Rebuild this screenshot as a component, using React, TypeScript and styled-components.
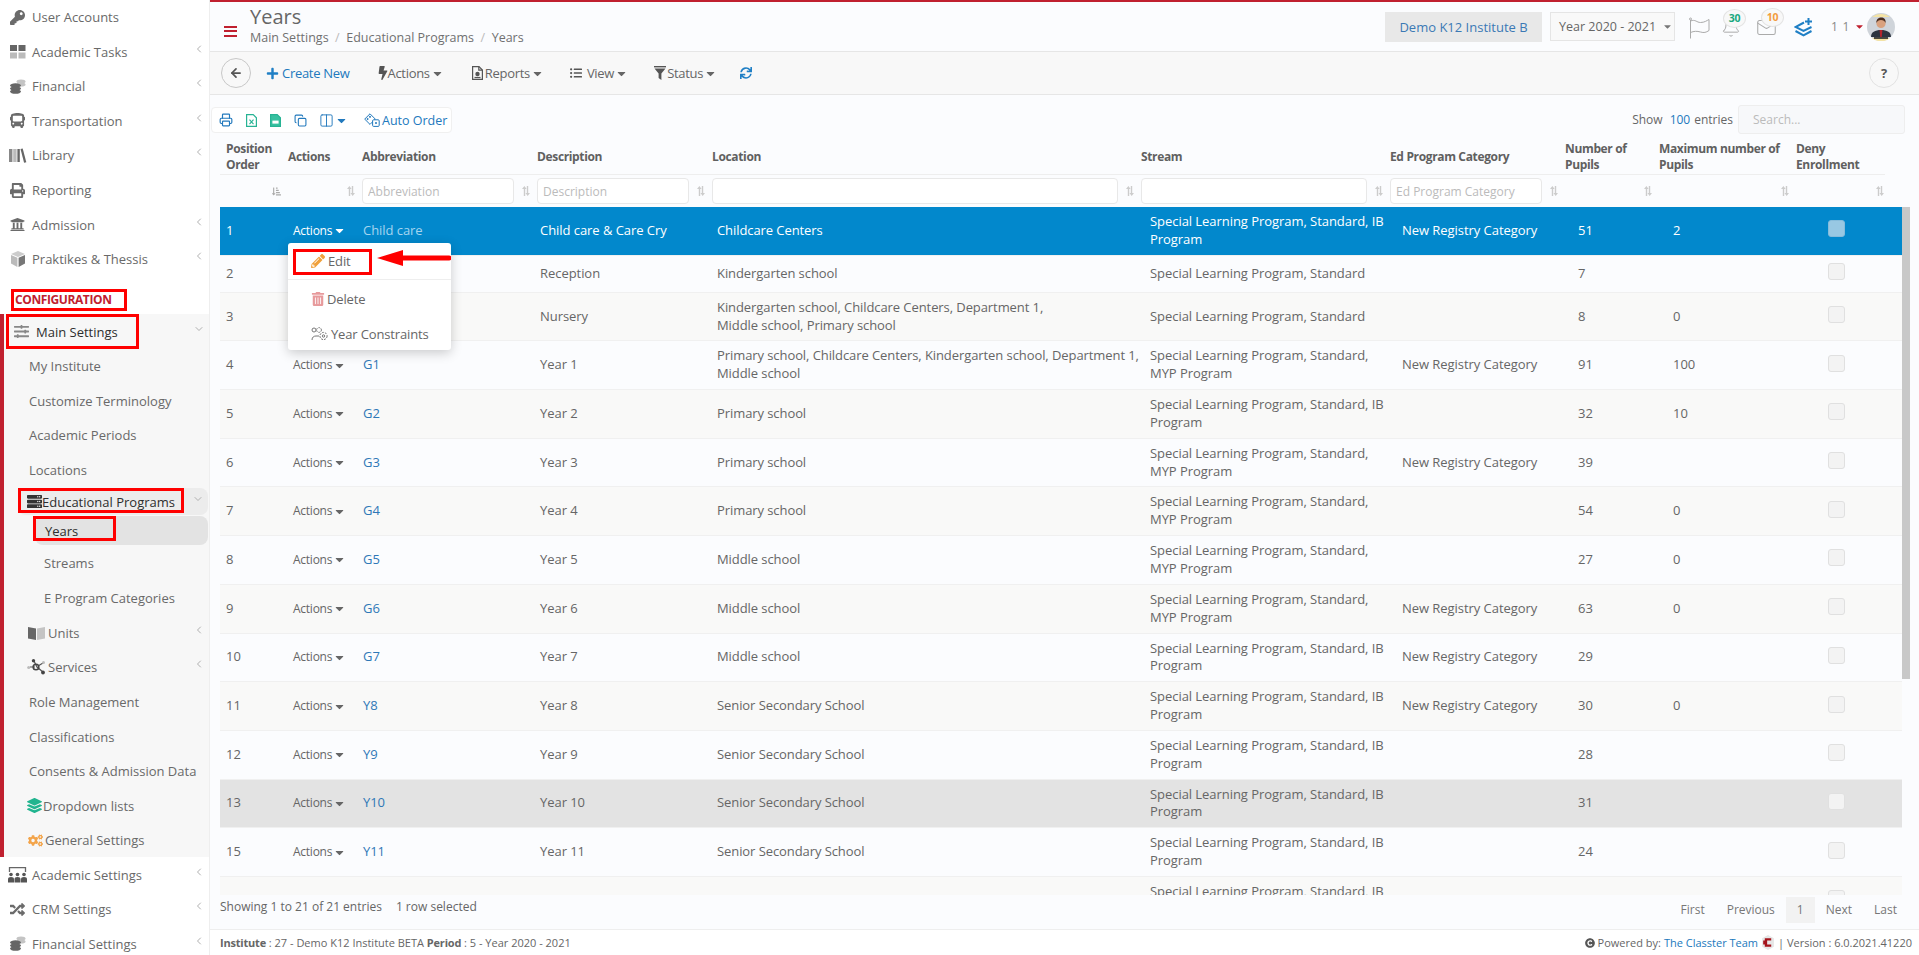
import React from 'react';
import styled, { createGlobalStyle } from 'styled-components';
import { ChevronLeft, ChevronDown, ArrowLeft, Printer, Copy, Columns2, Bell, Mail } from 'lucide-react';
import {
  FaKey, FaBus, FaPrint, FaUniversity, FaSlidersH, FaServer, FaLayerGroup, FaCogs, FaRandom,
  FaPlus, FaBolt, FaListUl, FaSync, FaCaretDown, FaPencilAlt, FaTrashAlt, FaCopyright,
  FaSortAmountDownAlt,
} from 'react-icons/fa';

const GlobalStyle = createGlobalStyle`
  html, body { margin: 0; padding: 0; height: 100%; overflow: hidden; background: #fff; }
  body, input { font-family: "Open Sans", "Liberation Sans", sans-serif; }
  * { box-sizing: border-box; }
`;

const RED = '#c0202f';
const BLUE = '#2279bd';

/* small duotone icons that the packages don't have */
const GridIcon = () => (
  <svg width="16" height="14" viewBox="0 0 16 14">
    <rect x="0" y="0" width="7" height="6" fill="#666" />
    <rect x="8.5" y="0" width="7" height="6" fill="#666" />
    <rect x="0" y="7.5" width="7" height="6" fill="#bbb" />
    <rect x="8.5" y="7.5" width="7" height="6" fill="#bbb" />
  </svg>
);
const CoinsIcon = () => (
  <svg width="16" height="15" viewBox="0 0 16 15">
    <ellipse cx="11" cy="2.5" rx="4.5" ry="2" fill="#c4c4c4" />
    <ellipse cx="11" cy="5.5" rx="4.5" ry="2" fill="#c4c4c4" />
    <ellipse cx="5.5" cy="6.5" rx="5.5" ry="2.2" fill="#666" />
    <ellipse cx="5.5" cy="9.6" rx="5.5" ry="2.2" fill="#666" />
    <ellipse cx="5.5" cy="12.6" rx="5.5" ry="2.2" fill="#666" />
  </svg>
);
const BooksIcon = () => (
  <svg width="18" height="15" viewBox="0 0 18 15">
    <rect x="0" y="1" width="3.4" height="13" fill="#888" />
    <rect x="4.2" y="1" width="3.4" height="13" fill="#bbb" />
    <rect x="8.4" y="1" width="2.4" height="13" fill="#666" />
    <path d="M11.5 1l2.2-.6 3.6 13.8-2.2.6z" fill="#666" />
  </svg>
);
const CubeIcon = () => (
  <svg width="16" height="16" viewBox="0 0 16 16">
    <path d="M8 0l7 3-7 3-7-3z" fill="#ccc" />
    <path d="M1 4l6.4 2.8V16L1 12.6z" fill="#bbb" />
    <path d="M15 4L8.6 6.8V16l6.4-3.4z" fill="#777" />
  </svg>
);
const BookIcon = () => (
  <svg width="17" height="14" viewBox="0 0 17 14">
    <path d="M0 1l8 1.4V14L0 12.4z" fill="#666" />
    <path d="M9 2.4L17 1v11.4L9 14z" fill="#c4c4c4" />
  </svg>
);
const NodesIcon = () => (
  <svg width="19" height="16" viewBox="0 0 19 16">
    <path d="M7 2l3 6 6 5M8 8l-5 0M11 7l5-3" stroke="#555" strokeWidth="1.2" fill="none" />
    <circle cx="6.5" cy="1.8" r="1.7" fill="#444" />
    <circle cx="9" cy="8" r="2.8" fill="none" stroke="#444" strokeWidth="1.6" />
    <circle cx="1.7" cy="8.4" r="1.5" fill="#bbb" />
    <circle cx="16" cy="13.5" r="1.9" fill="#444" />
    <circle cx="16.5" cy="3.5" r="1.5" fill="#bbb" />
  </svg>
);
const ClassroomIcon = () => (
  <svg width="19" height="16" viewBox="0 0 19 16">
    <path d="M1.5 5V.7h16V5" stroke="#666" strokeWidth="1.3" fill="none" />
    {[3, 9.5, 16].map((x) => (
      <g key={x} fill="#555">
        <circle cx={x} cy="7.5" r="1.8" />
        <path d={`M${x - 3} 15.5v-3.2a3 2.2 0 0 1 6 0v3.2z`} />
      </g>
    ))}
  </svg>
);
const SortIcon = () => (
  <svg width="8" height="10" viewBox="0 0 8 10" fill="#cccccc">
    <path d="M1.800 10V3H0l2.400-3 2.200 3H3.200v7zM4.800 0h1.400v7H8l-2.300 3-2.200-3h1.300z" />
  </svg>
);
const XlsIcon = ({ solid }: { solid?: boolean }) => (
  <svg width="11" height="13" viewBox="0 0 11 13">
    <path d="M.6.6h6.6l3.200 3.200v8.600H.6z" fill={solid ? '#38c0a0' : 'none'} stroke="#27b394" strokeWidth="1.2" />
    {solid
      ? <rect x="2.400" y="6.600" width="6.200" height="3" fill="#fff" />
      : <path d="M3.500 5.600l4 4.600m0-4.600l-4 4.600" stroke="#27b394" strokeWidth="1.1" />}
  </svg>
);
const DiceIcon = () => (
  <svg width="16" height="14" viewBox="0 0 16 14" fill="none" stroke={BLUE} strokeWidth="1">
    <path d="M6 .8l5.300 5.300L6 11.400.7 6.100z" />
    <rect x="8.600" y="6.800" width="6.600" height="6.600" rx="1" fill="#fff" />
    <circle cx="6" cy="3.800" r=".6" fill={BLUE} />
    <circle cx="3.600" cy="6" r=".6" fill={BLUE} />
    <circle cx="12" cy="10" r=".6" fill={BLUE} />
  </svg>
);
const LayersPlusIcon = () => (
  <svg width="19" height="19" viewBox="0 0 19 19" fill="none" stroke="#1f7fc5" strokeWidth="2">
    <path d="M10 4.500L1.500 9l8 4 8-4" />
    <path d="M1.500 13l8 4.400 8-4.400" />
    <path d="M14.500 0v7M11 3.500h7" />
  </svg>
);
const FlagIcon = () => (
  <svg width="21" height="22" viewBox="0 0 21 22" fill="none" stroke="#aaa" strokeWidth="1">
    <circle cx="1.500" cy="2" r="1" />
    <path d="M1.500 3v18.500" />
    <path d="M1.500 4c5-2 6 1.500 10 1.500S18 3.500 20 2.500v11c-3 2-5 2.500-8.500 1.500s-6.500-1-10 .5" />
  </svg>
);
const GearsOutline = () => (
  <svg width="17" height="14" viewBox="0 0 17 14" fill="none" stroke="#777" strokeWidth="1">
    <circle cx="3" cy="3" r="2" />
    <circle cx="8" cy="3" r="2.400" strokeDasharray="1.6 .8" />
    <circle cx="12.500" cy="9" r="3.600" strokeDasharray="2 1" />
    <circle cx="12.500" cy="9" r="1.200" />
    <path d="M1 13c0-3 2-4 4-4h3" />
  </svg>
);
const ReportIcon = () => (
  <svg width="11" height="14" viewBox="0 0 11 14" fill="none" stroke="#555" strokeWidth="1.2">
    <path d="M.6.6h6.400l3.400 3.400v9.400H.6z" />
    <path d="M6.800.8v3.400h3.400" />
    <circle cx="5.500" cy="8" r="2.200" fill="#555" stroke="none" />
    <path d="M2.500 11.500h6" />
  </svg>
);
const StatusFilterIcon = () => (
  <svg width="12" height="14" viewBox="0 0 12 14" fill="#555">
    <rect x="0" y="0" width="12" height="1.400" />
    <path d="M.5 2.500h11L7.400 7.500V14L4.600 12V7.500z" />
  </svg>
);
const Avatar = () => (
  <svg width="28" height="28" viewBox="0 0 28 28">
    <circle cx="14" cy="14" r="14" fill="#cfd4da" />
    <path d="M14 1a14 14 0 0 1 9 3H5a14 14 0 0 1 9-3zM5 25h18a14 14 0 0 1-18 0z" fill="#f4e3a4" />
    <path d="M4 24c0-5 4-7 10-7s10 2 10 7z" fill="#2c3440" />
    <path d="M12.600 17h2.800l-.6 7h-1.600z" fill="#b3242c" />
    <circle cx="14" cy="10.500" r="4.600" fill="#d9a17e" />
    <path d="M9.300 10c0-4 2.400-5.500 5-5.500s4.600 1.700 4.400 5.500c-1-2-2.400-3-4.700-3s-3.700 1-4.700 3z" fill="#4a2c1d" />
    <rect x="7" y="24.200" width="14" height="1.600" fill="#222" />
  </svg>
);
const ClassterLogo = () => (
  <svg width="14" height="15" viewBox="0 0 12 14">
    <path d="M6 0l5.500 3v8L6 14 .5 11V3z" fill="#e6e6e6" />
    <path d="M3 3h6v2.200H5.200v3.600H9V11H3V8.800H1.500V5.200H3z" fill="#a5141c" />
  </svg>
);

const Root = styled.div`
  position: relative;
  display: flex;
  width: 100vw;
  height: 100vh;
  overflow: hidden;
  font-size: 13px;
  color: #666;
`;

/* ---- sidebar ---- */
const Sidebar = styled.nav`
  flex: 0 0 210px;
  height: 100%;
  background: #fff;
  border-right: 1px solid #eee;
  overflow: hidden;
`;
const NavItem = styled.a<{ $h?: number; $pad?: number; $gap?: number; $dark?: boolean; $bg?: string; $ml?: number }>`
  display: flex;
  align-items: center;
  gap: ${(p) => p.$gap ?? 7}px;
  height: ${(p) => p.$h ?? 34.55}px;
  padding-left: ${(p) => p.$pad ?? 10}px;
  padding-right: 4px;
  margin-left: ${(p) => p.$ml ?? 0}px;
  margin-top: ${(p) => (p.$bg ? '1px' : '0')};
  margin-right: ${(p) => (p.$bg ? '1px' : '0')};
  color: ${(p) => (p.$dark ? '#2e2e2e' : '#696969')};
  white-space: nowrap;
  background: ${(p) => p.$bg ?? 'transparent'};
  border-radius: ${(p) => (p.$bg ? '8px' : '0')};
`;
const NavIcon = styled.span<{ $w?: number; $color?: string }>`
  flex: 0 0 ${(p) => p.$w ?? 15}px;
  min-width: 0;
  display: flex;
  align-items: center;
  justify-content: center;
  color: ${(p) => p.$color ?? '#6b6b6b'};
  font-size: 15px;
  svg { flex: none; }
`;
const NavArrow = styled.span`
  margin-left: auto;
  display: flex;
  margin-top: -6px;
  color: #b0b0b0;
`;
const SectionLabel = styled.div`
  height: 38px;
  padding: 17px 0 0 15px;
  font-size: 12px;
  line-height: 14px;
  font-weight: 700;
  letter-spacing: -0.4px;
  color: ${RED};
`;
const ActiveGroup = styled.div`
  background: #f7f7f7;
  border-left: 4px solid ${RED};
`;
const Caret = styled(FaCaretDown)<{ $color?: string }>`
  font-size: 13px;
  margin-left: 1px;
  flex: none;
  color: ${(p) => p.$color ?? 'currentColor'};
`;

/* ---- main column ---- */
const Main = styled.main`
  flex: 1;
  min-width: 0;
  display: flex;
  flex-direction: column;
  border-top: 2px solid ${RED};
  background: #fbfcfe;
`;
const TopBar = styled.header`
  flex: 0 0 50px;
  display: flex;
  align-items: center;
  border-bottom: 1px solid #e6e6e6;
  padding: 0 24px 0 14px;
`;
const Burger = styled.div`
  width: 13px;
  height: 11px;
  margin-top: 9px;
  border-top: 2px solid ${RED};
  border-bottom: 2px solid ${RED};
  position: relative;
  &::after {
    content: '';
    position: absolute;
    left: 0;
    right: 0;
    top: 2.500px;
    height: 2px;
    background: ${RED};
  }
`;
const TitleBlock = styled.div`
  margin-left: 13px;
  margin-top: -1px;
`;
const PageTitle = styled.div`
  font-size: 20px;
  line-height: 24px;
  color: #666;
`;
const Crumbs = styled.div`
  display: flex;
  font-size: 12.500px;
  line-height: 18px;
  color: #707070;
  span + span::before {
    content: '/';
    color: #bbb;
    margin: 0 6.500px;
  }
`;
const TopRight = styled.div`
  margin-left: auto;
  display: flex;
  align-items: center;
`;
const InstituteBox = styled.div`
  width: 157px;
  height: 30px;
  line-height: 30px;
  text-align: center;
  background: #e8e8e8;
  color: #3b79b5;
`;
const YearSelect = styled.div`
  width: 125px;
  height: 29px;
  margin-left: 8px;
  display: flex;
  align-items: center;
  padding-left: 8px;
  border: 1px solid #e5e5e5;
  background: #f9f9f9;
  color: #666;
  font-size: 12.500px;
  svg { margin-left: 6px; color: #777; }
`;
const IconSlot = styled.div<{ $ml: number; $w: number }>`
  position: relative;
  margin-left: ${(p) => p.$ml}px;
  margin-top: 2px;
  width: ${(p) => p.$w}px;
  display: flex;
  align-items: center;
  justify-content: center;
  color: #aaa;
`;
const Bubble = styled.span<{ $color: string; $left: number }>`
  position: absolute;
  top: -9px;
  left: ${(p) => p.$left}px;
  width: 23px;
  height: 19px;
  line-height: 17px;
  border-radius: 50%;
  text-align: center;
  background: #f8f8f8;
  border: 1px solid #e4e4e4;
  font-size: 10.500px;
  font-weight: 700;
  letter-spacing: -0.3px;
  color: ${(p) => p.$color};
`;
const UserInitials = styled.span`
  margin-left: 18px;
  color: #888;
  letter-spacing: 0.7px;
  font-size: 12px;
`;
const UserCaret = styled(FaCaretDown)`
  margin: 0 2px 0 4px;
  font-size: 11px;
  color: ${RED};
`;

const Toolbar = styled.div`
  flex: 0 0 43px;
  display: flex;
  align-items: center;
  padding: 0 20px 0 11px;
  background: #f8f8f8;
  border-bottom: 1px solid #e6e6e6;
`;
const RoundButton = styled.button`
  flex: none;
  width: 30px;
  height: 30px;
  padding: 0;
  display: flex;
  align-items: center;
  justify-content: center;
  background: transparent;
  border: 1px solid #c8c8c8;
  border-radius: 50%;
  color: #555;
  font: 700 13px "Open Sans", sans-serif;
`;
const HelpButton = styled(RoundButton)`
  margin-left: auto;
  border-color: #e2e2e2;
`;
const ToolAction = styled.a<{ $ml: number; $gap: number; $blue?: boolean }>`
  display: flex;
  align-items: center;
  margin-left: ${(p) => p.$ml}px;
  font-size: 13px;
  letter-spacing: -0.3px;
  color: ${(p) => (p.$blue ? BLUE : '#666')};
  svg:first-child { margin-right: ${(p) => p.$gap}px; color: #555; }
`;
const BlueGlyph = styled.span`
  display: flex;
  color: #1f7fc5;
  svg:first-child { color: #1f7fc5; margin-right: 3px; }
`;

const Content = styled.section`
  flex: 1;
  min-height: 0;
  display: flex;
  flex-direction: column;
`;
const Controls = styled.div`
  flex: 0 0 38px;
  display: flex;
  align-items: flex-start;
  padding: 12px 14px 0 1px;
`;
const DtButtons = styled.div`
  flex: none;
  width: 241px;
  height: 26px;
  display: flex;
  align-items: center;
  padding-left: 7px;
  background: #fff;
  border: 1px solid #f0f0f0;
  border-radius: 4px;
  color: ${BLUE};
`;
const DtButton = styled.span<{ $ml?: number }>`
  flex: none;
  display: flex;
  align-items: center;
  white-space: nowrap;
  margin-left: ${(p) => p.$ml ?? 0}px;
  font-size: 12.500px;
  svg + span { margin-left: 2px; }
`;
const EntriesControl = styled.div`
  margin-left: auto;
  margin-top: -2px;
  display: flex;
  align-items: center;
  height: 29px;
  font-size: 12px;
  color: #666;
  b { font-weight: 400; color: ${BLUE}; margin: 0 4px 0 7px; }
`;
const SearchInput = styled.input`
  width: 167px;
  height: 29px;
  margin-left: 5px;
  padding: 0 14px;
  background: #f7f8fa;
  border: 1px solid #eee;
  border-radius: 3px;
  font-size: 12px;
  &::placeholder { color: #bbb; }
`;

const HEAD_COLS = '62px 74px 175px 175px 429px 249px 175px 94px 137px 95px';
const BODY_COLS = '65px 70px 177px 177px 433px 252px 176px 95px 125px 112px';

const HeadRow = styled.div`
  display: grid;
  grid-template-columns: ${HEAD_COLS};
  align-items: center;
  margin-left: 10px;
  width: 1665px;
  height: 42px;
  padding-top: 5px;
  border-bottom: 1px solid #eee;
`;
const HeadCell = styled.div`
  padding-left: 6px;
  font-size: 12px;
  line-height: 16px;
  font-weight: 700;
  letter-spacing: -0.35px;
  color: #606060;
`;
const FilterRow = styled.div`
  display: grid;
  grid-template-columns: ${HEAD_COLS};
  align-items: center;
  margin-left: 10px;
  width: 1665px;
  height: 32px;
`;
const FilterCell = styled.div`
  display: flex;
  align-items: center;
  justify-content: flex-end;
  gap: 8px;
  padding: 0 1px 0 6px;
`;
const FilterInput = styled.input`
  flex: 1;
  min-width: 0;
  height: 26px;
  padding: 0 5px;
  background: #fff;
  border: 1px solid #e8e8e8;
  border-radius: 4px;
  font-size: 12px;
  &::placeholder { color: #bbb; }
`;

const TableArea = styled.div`
  flex: 0 0 688px;
  display: flex;
  margin-left: 10px;
`;
const TableBody = styled.div`
  width: 1682px;
  height: 688px;
  overflow: hidden;
`;
const ScrollThumb = styled.div`
  width: 8px;
  height: 472px;
  background: #c8c8c8;
`;
const Row = styled.div<{ $selected?: boolean; $hover?: boolean; $odd?: boolean }>`
  display: grid;
  grid-template-columns: ${BODY_COLS};
  align-items: center;
  min-height: 37px;
  padding: 6px 0;
  line-height: 17.850px;
  letter-spacing: -0.05px;
  border-bottom: 1px solid #f0f0f0;
  color: ${(p) => (p.$selected ? '#fff' : '#666')};
  background: ${(p) => (p.$selected ? '#0288cc' : p.$hover ? '#e3e3e3' : p.$odd ? '#f9f9f8' : '#fbfcfe')};
`;
const Cell = styled.div`
  padding-left: 8px;
  padding-right: 4px;
  &:first-child { padding-left: 6px; }
`;
const LocationCell = styled(Cell)`
  white-space: pre;
  letter-spacing: -0.08px;
`;
const RowActions = styled.span`
  display: inline-flex;
  align-items: center;
  font-size: 12px;
  letter-spacing: -0.25px;
`;
const AbbrLink = styled.a<{ $selected?: boolean }>`
  color: ${(p) => (p.$selected ? '#a5d5ef' : '#2f78b7')};
`;
const CheckCell = styled.div`
  display: flex;
  justify-content: center;
  padding-right: 20px;
`;
const CheckBox = styled.span<{ $selected?: boolean }>`
  width: 17px;
  height: 17px;
  margin-top: -4px;
  border-radius: 3px;
  background: ${(p) => (p.$selected ? '#98c8e3' : '#f3f3f3')};
  border: 1px solid ${(p) => (p.$selected ? '#86bcdb' : '#e0e0e0')};
`;

const InfoRow = styled.div`
  flex: 0 0 34px;
  display: flex;
  align-items: center;
  justify-content: space-between;
  padding: 0 11px 0 10px;
  font-size: 12px;
  color: #666;
`;
const InfoText = styled.div`
  margin-bottom: 12px;
  span + span { margin-left: 14px; }
`;
const Pager = styled.div`
  display: flex;
  align-items: center;
  margin-bottom: 4px;
  font-size: 12px;
`;
const PageLink = styled.a<{ $current?: boolean }>`
  padding: 0 11px;
  height: 26px;
  line-height: 26px;
  color: #777;
  background: ${(p) => (p.$current ? '#f2f2f2' : 'transparent')};
`;
const Footer = styled.footer`
  flex: 0 0 26px;
  display: flex;
  align-items: center;
  justify-content: space-between;
  padding: 0 7px 0 10px;
  background: #fff;
  border-top: 1px solid #eee;
  font-size: 11px;
  color: #666;
  b { font-weight: 700; letter-spacing: -0.2px; }
`;
const FooterRight = styled.div`
  display: flex;
  align-items: center;
  gap: 3px;
  a { color: ${BLUE}; }
`;

/* ---- things lying over the page ---- */
const ActionMenu = styled.div`
  position: absolute;
  left: 288px;
  top: 243px;
  width: 163px;
  height: 107px;
  background: #fff;
  border-radius: 3px;
  box-shadow: 0 3px 12px rgba(0, 0, 0, 0.2);
  color: #666;
`;
const MenuItem = styled.div<{ $h: number; $line?: boolean; $gap?: number }>`
  display: flex;
  align-items: center;
  gap: ${(p) => p.$gap ?? 3}px;
  height: ${(p) => p.$h}px;
  padding-left: 23px;
  letter-spacing: -0.15px;
  border-bottom: ${(p) => (p.$line ? '1px solid #eee' : '0')};
`;
const RedBox = styled.div<{ $x: number; $y: number; $w: number; $h: number }>`
  position: absolute;
  left: ${(p) => p.$x}px;
  top: ${(p) => p.$y}px;
  width: ${(p) => p.$w}px;
  height: ${(p) => p.$h}px;
  border: 3px solid #f00;
`;
const RedArrow = styled.svg`
  position: absolute;
  left: 377px;
  top: 250px;
`;

type RowData = {
  pos: string; abbr?: string; desc?: string; loc: string; stream: string;
  cat?: boolean; pupils?: string; max?: string; selected?: boolean; hover?: boolean;
};

const IB = 'Special Learning Program, Standard, IB Program';
const MYP = 'Special Learning Program, Standard, MYP Program';
const STD = 'Special Learning Program, Standard';

const rows: RowData[] = [
  { pos: '1', abbr: 'Child care', desc: 'Child care & Care Cry', loc: 'Childcare Centers', stream: IB, cat: true, pupils: '51', max: '2', selected: true },
  { pos: '2', desc: 'Reception', loc: 'Kindergarten school', stream: STD, pupils: '7' },
  { pos: '3', desc: 'Nursery', loc: 'Kindergarten school, Childcare Centers, Department 1,\nMiddle school, Primary school', stream: STD, pupils: '8', max: '0' },
  { pos: '4', abbr: 'G1', desc: 'Year 1', loc: 'Primary school, Childcare Centers, Kindergarten school, Department 1,\nMiddle school', stream: MYP, cat: true, pupils: '91', max: '100' },
  { pos: '5', abbr: 'G2', desc: 'Year 2', loc: 'Primary school', stream: IB, pupils: '32', max: '10' },
  { pos: '6', abbr: 'G3', desc: 'Year 3', loc: 'Primary school', stream: MYP, cat: true, pupils: '39' },
  { pos: '7', abbr: 'G4', desc: 'Year 4', loc: 'Primary school', stream: MYP, pupils: '54', max: '0' },
  { pos: '8', abbr: 'G5', desc: 'Year 5', loc: 'Middle school', stream: MYP, pupils: '27', max: '0' },
  { pos: '9', abbr: 'G6', desc: 'Year 6', loc: 'Middle school', stream: MYP, cat: true, pupils: '63', max: '0' },
  { pos: '10', abbr: 'G7', desc: 'Year 7', loc: 'Middle school', stream: IB, cat: true, pupils: '29' },
  { pos: '11', abbr: 'Y8', desc: 'Year 8', loc: 'Senior Secondary School', stream: IB, cat: true, pupils: '30', max: '0' },
  { pos: '12', abbr: 'Y9', desc: 'Year 9', loc: 'Senior Secondary School', stream: IB, pupils: '28' },
  { pos: '13', abbr: 'Y10', desc: 'Year 10', loc: 'Senior Secondary School', stream: IB, pupils: '31', hover: true },
  { pos: '15', abbr: 'Y11', desc: 'Year 11', loc: 'Senior Secondary School', stream: IB, pupils: '24' },
  { pos: '', loc: '', stream: IB },
];

const headers = ['Position Order', 'Actions', 'Abbreviation', 'Description', 'Location', 'Stream', 'Ed Program Category', 'Number of Pupils', 'Maximum number of Pupils', 'Deny Enrollment'];
const filters: Record<number, string> = { 2: 'Abbreviation', 3: 'Description', 4: '', 5: '', 6: 'Ed Program Category' };

const Arrow = () => <NavArrow><ChevronLeft size={12} /></NavArrow>;

const App: React.FC = () => (
  <Root>
    <GlobalStyle />
    <Sidebar>
      <NavItem><NavIcon><FaKey /></NavIcon>User Accounts</NavItem>
      <NavItem><NavIcon><GridIcon /></NavIcon>Academic Tasks<Arrow /></NavItem>
      <NavItem><NavIcon><CoinsIcon /></NavIcon>Financial<Arrow /></NavItem>
      <NavItem><NavIcon><FaBus /></NavIcon>Transportation<Arrow /></NavItem>
      <NavItem><NavIcon><BooksIcon /></NavIcon>Library<Arrow /></NavItem>
      <NavItem><NavIcon><FaPrint /></NavIcon>Reporting</NavItem>
      <NavItem><NavIcon><FaUniversity /></NavIcon>Admission<Arrow /></NavItem>
      <NavItem><NavIcon><CubeIcon /></NavIcon>Praktikes &amp; Thessis<Arrow /></NavItem>
      <SectionLabel>CONFIGURATION</SectionLabel>
      <ActiveGroup>
        <NavItem $pad={10} $dark><NavIcon $w={15} $color="#888"><FaSlidersH /></NavIcon>Main Settings<NavArrow><ChevronDown size={12} /></NavArrow></NavItem>
        <NavItem $pad={25}>My Institute</NavItem>
        <NavItem $pad={25}>Customize Terminology</NavItem>
        <NavItem $pad={25}>Academic Periods</NavItem>
        <NavItem $pad={25}>Locations</NavItem>
        <NavItem $h={27} $ml={14} $pad={9} $gap={1} $dark $bg="#ececec"><NavIcon $w={14} $color="#333"><FaServer /></NavIcon>Educational Programs<NavArrow><ChevronDown size={12} /></NavArrow></NavItem>
        <NavItem $h={29} $ml={31} $pad={10} $dark $bg="#e3e3e3">Years</NavItem>
        <NavItem $h={35} $pad={40}>Streams</NavItem>
        <NavItem $h={35.500} $pad={40}>E Program Categories</NavItem>
        <NavItem $pad={24} $gap={3}><NavIcon $w={17}><BookIcon /></NavIcon>Units<Arrow /></NavItem>
        <NavItem $pad={23} $gap={2}><NavIcon $w={19}><NodesIcon /></NavIcon>Services<Arrow /></NavItem>
        <NavItem $pad={25}>Role Management</NavItem>
        <NavItem $pad={25}>Classifications</NavItem>
        <NavItem $pad={25}>Consents &amp; Admission Data</NavItem>
        <NavItem $pad={23} $gap={2}><NavIcon $w={14} $color="#21b48f"><FaLayerGroup /></NavIcon>Dropdown lists</NavItem>
        <NavItem $pad={23} $gap={2}><NavIcon $w={16} $color="#f3a44a"><FaCogs /></NavIcon>General Settings</NavItem>
      </ActiveGroup>
      <NavItem $pad={8} $gap={5}><NavIcon $w={19}><ClassroomIcon /></NavIcon>Academic Settings<Arrow /></NavItem>
      <NavItem><NavIcon><FaRandom /></NavIcon>CRM Settings<Arrow /></NavItem>
      <NavItem><NavIcon><CoinsIcon /></NavIcon>Financial Settings<Arrow /></NavItem>
    </Sidebar>

    <Main>
      <TopBar>
        <Burger />
        <TitleBlock>
          <PageTitle>Years</PageTitle>
          <Crumbs><span>Main Settings</span><span>Educational Programs</span><span>Years</span></Crumbs>
        </TitleBlock>
        <TopRight>
          <InstituteBox>Demo K12 Institute B</InstituteBox>
          <YearSelect>Year 2020 - 2021<FaCaretDown size={11} /></YearSelect>
          <IconSlot $ml={13} $w={22}><FlagIcon /></IconSlot>
          <IconSlot $ml={11} $w={20}><Bell size={20} strokeWidth={1.2} /><Bubble $color="#1aa97f" $left={2}>30</Bubble></IconSlot>
          <IconSlot $ml={14} $w={22}><Mail size={21} strokeWidth={1.2} /><Bubble $color="#f39c3d" $left={6}>10</Bubble></IconSlot>
          <IconSlot $ml={17} $w={19}><LayersPlusIcon /></IconSlot>
          <UserInitials>1 1</UserInitials>
          <UserCaret />
          <Avatar />
        </TopRight>
      </TopBar>

      <Toolbar>
        <RoundButton><ArrowLeft size={14} strokeWidth={3} /></RoundButton>
        <ToolAction $ml={15} $gap={3} $blue><BlueGlyph><FaPlus size={13} /></BlueGlyph>Create New</ToolAction>
        <ToolAction $ml={26} $gap={-2}><FaBolt size={14} />Actions<Caret /></ToolAction>
        <ToolAction $ml={28} $gap={2}><ReportIcon />Reports<Caret /></ToolAction>
        <ToolAction $ml={26} $gap={5}><FaListUl size={12} />View<Caret /></ToolAction>
        <ToolAction $ml={26} $gap={1}><StatusFilterIcon />Status<Caret /></ToolAction>
        <ToolAction $ml={23} $gap={0} $blue><BlueGlyph><FaSync size={12} /></BlueGlyph></ToolAction>
        <HelpButton>?</HelpButton>
      </Toolbar>

      <Content>
        <Controls>
          <DtButtons>
            <DtButton><Printer size={14} /></DtButton>
            <DtButton $ml={13}><XlsIcon /></DtButton>
            <DtButton $ml={13}><XlsIcon solid /></DtButton>
            <DtButton $ml={13}><Copy size={13} /></DtButton>
            <DtButton $ml={12}><Columns2 size={15} strokeWidth={1.5} /><Caret /></DtButton>
            <DtButton $ml={16}><DiceIcon /><span>Auto Order</span></DtButton>
          </DtButtons>
          <EntriesControl>
            Show<b>100</b>entries
            <SearchInput placeholder="Search..." />
          </EntriesControl>
        </Controls>

        <HeadRow>
          {headers.map((h) => <HeadCell key={h}>{h}</HeadCell>)}
        </HeadRow>
        <FilterRow>
          {headers.map((h, i) => (
            <FilterCell key={h}>
              {i in filters && <FilterInput placeholder={filters[i]} />}
              {i === 0 ? <FaSortAmountDownAlt size={9} color="#aaa" /> : <SortIcon />}
            </FilterCell>
          ))}
        </FilterRow>

        <TableArea>
          <TableBody>
            {rows.map((r, i) => (
              <Row key={i} $selected={r.selected} $hover={r.hover} $odd={i % 2 === 0}>
                <Cell>{r.pos}</Cell>
                <Cell>{r.pos && <RowActions>Actions<Caret /></RowActions>}</Cell>
                <Cell><AbbrLink $selected={r.selected}>{r.abbr}</AbbrLink></Cell>
                <Cell>{r.desc}</Cell>
                <LocationCell>{r.loc}</LocationCell>
                <Cell>{r.stream}</Cell>
                <Cell>{r.cat && 'New Registry Category'}</Cell>
                <Cell>{r.pupils}</Cell>
                <Cell>{r.max}</Cell>
                <CheckCell><CheckBox $selected={r.selected} /></CheckCell>
              </Row>
            ))}
          </TableBody>
          <ScrollThumb />
        </TableArea>

        <InfoRow>
          <InfoText><span>Showing 1 to 21 of 21 entries</span><span>1 row selected</span></InfoText>
          <Pager>
            <PageLink>First</PageLink>
            <PageLink>Previous</PageLink>
            <PageLink $current>1</PageLink>
            <PageLink>Next</PageLink>
            <PageLink>Last</PageLink>
          </Pager>
        </InfoRow>
      </Content>

      <Footer>
        <div><b>Institute</b> : 27 - Demo K12 Institute BETA <b>Period</b> : 5 - Year 2020 - 2021</div>
        <FooterRight>
          <FaCopyright size={10} color="#555" />
          Powered by: <a>The Classter Team</a> <ClassterLogo /> | Version : 6.0.2021.41220
        </FooterRight>
      </Footer>
    </Main>

    <ActionMenu>
      <MenuItem $h={37} $line><FaPencilAlt size={14} color="#f0a13c" />Edit</MenuItem>
      <MenuItem $h={38} $gap={2}><FaTrashAlt size={14} color="#e79a9c" />Delete</MenuItem>
      <MenuItem $h={32}><GearsOutline />Year Constraints</MenuItem>
    </ActionMenu>
    <RedBox $x={11} $y={289} $w={116} $h={22} />
    <RedBox $x={6} $y={314} $w={133} $h={35} />
    <RedBox $x={18} $y={488} $w={166} $h={25} />
    <RedBox $x={33} $y={516} $w={83} $h={25} />
    <RedBox $x={293} $y={249} $w={79} $h={26} />
    <RedArrow width="74" height="16" viewBox="0 0 74 16">
      <path d="M0 8L26 0v5.500h46a2.500 2.500 0 0 1 0 5H26V16z" fill="#f00" />
    </RedArrow>
  </Root>
);

export default App;
